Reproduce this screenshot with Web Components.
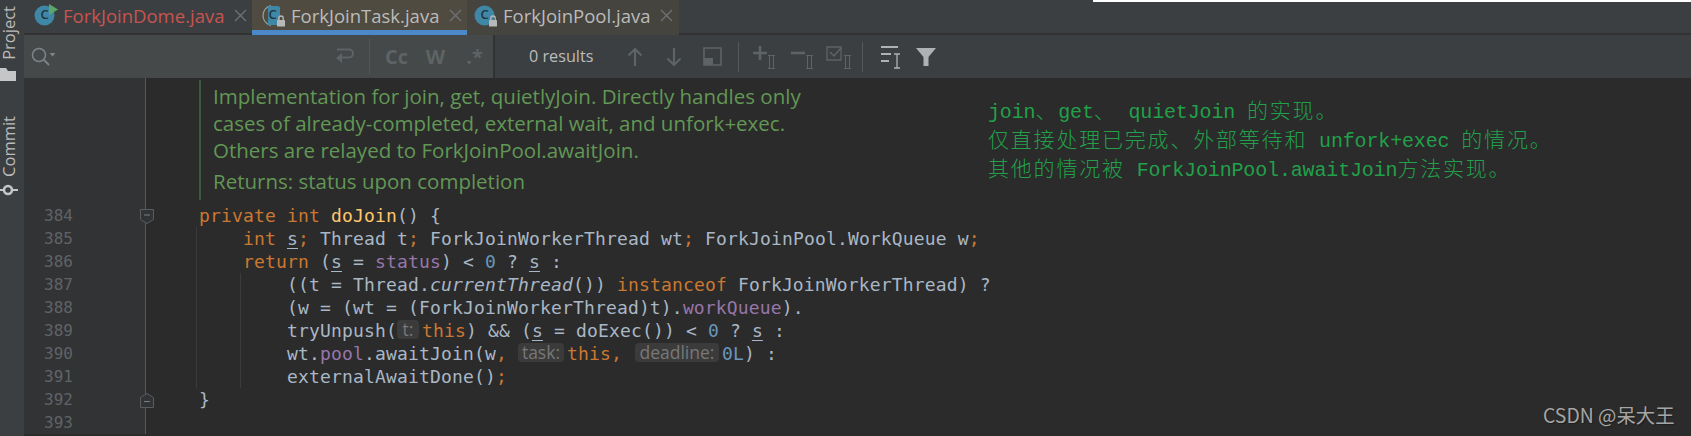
<!DOCTYPE html>
<html>
<head>
<meta charset="utf-8">
<title>ForkJoinTask.java</title>
<style>
  html, body { margin: 0; padding: 0; background: #2b2b2b; }
</style>
</head>
<body>
<ide-window>
  <tool-strip slot="strip"></tool-strip>
  <tab-strip slot="tabs">
    <editor-tab name="ForkJoinDome.java" kind="run" width="228" color="#c75450"></editor-tab>
    <editor-tab name="ForkJoinTask.java" kind="pinned" width="215" active></editor-tab>
    <editor-tab name="ForkJoinPool.java" kind="lock" width="212" pad="7" tint="#45443f"></editor-tab>
  </tab-strip>
  <find-bar slot="find"></find-bar>
  <code-pane slot="editor">
    <doc-block>
      <p>Implementation for join, get, quietlyJoin. Directly handles only</p>
      <p>cases of already-completed, external wait, and unfork+exec.</p>
      <p>Others are relayed to ForkJoinPool.awaitJoin.</p>
      <p class="ret">Returns: status upon completion</p>
    </doc-block>
    <code-line num="384" fold="open"><k>private int </k><m>doJoin</m>() {</code-line>
    <code-line num="385" guides="1">    <k>int </k><u>s</u><k>;</k> Thread t<k>;</k> ForkJoinWorkerThread wt<k>;</k> ForkJoinPool.WorkQueue w<k>;</k></code-line>
    <code-line num="386" guides="1">    <k>return</k> (<u>s</u> = <f>status</f>) &lt; <n>0</n> ? <u>s</u> :</code-line>
    <code-line num="387" guides="2">        ((t = Thread.<i>currentThread</i>()) <k>instanceof</k> ForkJoinWorkerThread) ?</code-line>
    <code-line num="388" guides="2">        (w = (wt = (ForkJoinWorkerThread)t).<f>workQueue</f>).</code-line>
    <code-line num="389" guides="2">        tryUnpush(<hint-pill w="22">t:</hint-pill><k>this</k>) &amp;&amp; (<u>s</u> = doExec()) &lt; <n>0</n> ? <u>s</u> :</code-line>
    <code-line num="390" guides="2">        wt.<f>pool</f>.awaitJoin(w<k>,</k> <hint-pill w="46">task:</hint-pill><k>this,</k> <hint-pill w="84" style="margin-left:2px">deadline:</hint-pill><n>0L</n>) :</code-line>
    <code-line num="391" guides="2">        externalAwaitDone()<k>;</k></code-line>
    <code-line num="392" fold="close">}</code-line>
    <code-line num="393"></code-line>
  </code-pane>
  <note-overlay slot="over"></note-overlay>
</ide-window>

<script>
// code tokens, no shadow needed for these, they are only styled by the line's ::slotted rules
class CodeLine extends HTMLElement {
  connectedCallback() {
    const num = this.getAttribute("num") || "";
    const fold = this.getAttribute("fold");
    const guides = Number(this.getAttribute("guides") || 0);
    const marker = fold === "open"
      ? `<svg class="fold" width="14" height="15" viewBox="0 0 14 15"><path d="M.5.5h13v10l-6.500 4-6.500-4z" fill="#313335" stroke="#5a5d5f"/><path d="M4 6h6" stroke="#7a7d7f"/></svg>`
      : fold === "close"
      ? `<svg class="fold" width="14" height="15" viewBox="0 0 14 15"><path d="M.5 14.500v-10l6.500-4 6.500 4v10z" fill="#313335" stroke="#5a5d5f"/><path d="M4 8.500h6" stroke="#7a7d7f"/></svg>`
      : "";
    let bg = "none";
    if (guides === 1) bg = "linear-gradient(#3b3b3b,#3b3b3b) 50px 0/1px 100% no-repeat";
    if (guides === 2) bg = "linear-gradient(#3b3b3b,#3b3b3b) 50px 0/1px 100% no-repeat, linear-gradient(#3b3b3b,#3b3b3b) 94px 0/1px 100% no-repeat";
    this.attachShadow({ mode: "open" }).innerHTML = `
      <style>
        :host { display: grid; grid-template-columns: 122px 1fr; height: 23px; }
        .gutter {
          position: relative;
          background: #313335;
          border-right: 1px solid #555759;
          color: #606366;
          font: 16px/23px "DejaVu Sans Mono", monospace;
          padding-left: 20px;
        }
        .fold { position: absolute; left: 116px; top: 5px; }
        pre {
          margin: 0;
          padding-left: 53px;
          height: 23px;
          background: ${bg};
          color: #a9b7c6;
          font: 18px/23px "DejaVu Sans Mono", monospace;
          letter-spacing: 0.16px;
          white-space: pre;
        }
        ::slotted(k) { color: #cc7832; }
        ::slotted(m) { color: #ffc66d; }
        ::slotted(f) { color: #9876aa; }
        ::slotted(n) { color: #6897bb; }
        ::slotted(u) { text-decoration: underline; text-underline-offset: 3px; }
        ::slotted(i) { font-style: italic; }
      </style>
      <div class="gutter">${num}${marker}</div>
      <pre><slot></slot></pre>`;
  }
}

class HintPill extends HTMLElement {
  connectedCallback() {
    this.attachShadow({ mode: "open" }).innerHTML = `<style>
        :host {
          display: inline-block;
          box-sizing: border-box;
          width: ${this.getAttribute("w")}px;
          height: 19px;
          margin: 0 3px 0 0;
          background: #3b3b3b;
          border-radius: 4px;
          color: #787878;
          font: 17.500px/18px "Open Sans", sans-serif;
          letter-spacing: 0;
          text-align: center;
          white-space: nowrap;
          vertical-align: 1px;
        }
      </style><slot></slot>`;
  }
}

class DocBlock extends HTMLElement {
  constructor() {
    super();
    this.attachShadow({ mode: "open" }).innerHTML = `
      <style>
        :host { display: grid; grid-template-columns: 122px 1fr; height: 126px; }
        .gutter { background: #313335; border-right: 1px solid #555759; }
        .body { padding: 2px 0 0 53px; }
        .inner {
          box-sizing: border-box;
          height: 120px;
          border-left: 2px solid #3d5a3b;
          padding: 3px 0 0 12px;
          color: #629755;
          font: 20.500px/27px "Open Sans", sans-serif;
        }
        ::slotted(p) { margin: 0; white-space: nowrap; }
        ::slotted(p.ret) { margin-top: 4px; }
      </style>
      <div class="gutter"></div>
      <div class="body"><div class="inner"><slot></slot></div></div>`;
  }
}

class CodePane extends HTMLElement {
  constructor() {
    super();
    this.attachShadow({ mode: "open" }).innerHTML = `
      <style>
        :host { display: block; height: 358px; overflow: hidden; background: #2b2b2b; }
      </style><slot></slot>`;
  }
}

class ToolStrip extends HTMLElement {
  constructor() {
    super();
    this.attachShadow({ mode: "open" }).innerHTML = `
      <style>
        :host { display: flex; flex-direction: column; width: 24px; height: 436px; background: #3c3f41; color: #bbbbbb;
          font: 16.500px "Open Sans", sans-serif; padding-top: 6px; box-sizing: border-box; }
        .v { writing-mode: vertical-rl; transform: rotate(180deg); width: 17px; line-height: 17px; white-space: nowrap; }
        svg { display: block; flex: none; }
      </style>
      <span class="v">Project</span>
      <svg style="margin-top:6px" width="17" height="15" viewBox="0 0 17 15"><path d="M0 2h6l2 3h8v10H0z" fill="#c4c6c8"/></svg>
      <span class="v" style="margin-top:35px">Commit</span>
      <svg style="margin-top:6px" width="18" height="14" viewBox="0 0 18 14"><circle cx="8" cy="7" r="4" fill="none" stroke="#c4c6c8" stroke-width="2.600"/><path d="M0 7h3M13 7h5" stroke="#c4c6c8" stroke-width="2"/></svg>`;
  }
}

class TabStrip extends HTMLElement {
  constructor() {
    super();
    this.attachShadow({ mode: "open" }).innerHTML = `
      <style>
        :host { display: flex; height: 35px; box-sizing: border-box; background: #3c3f41; border-bottom: 2px solid #323232; }
      </style><slot></slot>`;
  }
}

class EditorTab extends HTMLElement {
  connectedCallback() {
    const name = this.getAttribute("name");
    const kind = this.getAttribute("kind");
    const active = this.hasAttribute("active");
    const pad = this.getAttribute("pad") || 10;
    const tint = active ? "#4f4b41" : (this.getAttribute("tint") || "transparent");
    const lock = `<rect x="15" y="17" width="8" height="6.500" rx=".5" fill="#b6b8ba"/><path d="M16.800 17v-1.800a2.200 2.200 0 0 1 4.400 0V17" fill="none" stroke="#b6b8ba" stroke-width="1.300"/>`;
    const letter = `<text x="10.500" y="16" text-anchor="middle" font-family="Open Sans, sans-serif" font-size="13" font-weight="600" fill="#23343c">C</text>`;
    let icon;
    if (kind === "run") {
      icon = `<circle cx="10.500" cy="12.500" r="10" fill="#3f87a6"/>${letter}<path d="M15 1l9 5.500-9 5.500z" fill="#59a869"/>`;
    } else if (kind === "pinned") {
      icon = `<path d="M9 2.700a10 10 0 0 0 0 19.600" fill="none" stroke="#9a9a94" stroke-width="1.300"/><path d="M6 3h10a2 2 0 0 1 2 2v15a2 2 0 0 1-2 2H6z" fill="#3f87a6"/>${letter}${lock}`;
    } else {
      icon = `<circle cx="10.500" cy="12.500" r="10" fill="#3f87a6"/>${letter}${lock}`;
    }
    this.attachShadow({ mode: "open" }).innerHTML = `
      <style>
        :host {
          display: flex; align-items: center; box-sizing: border-box;
          width: ${this.getAttribute("width")}px; height: 35px; margin-bottom: -2px; padding: 0 0 5px ${pad}px;
          background: ${tint};
          ${active ? "box-shadow: inset 0 -5px 0 #4a88c7;" : ""}
          color: ${this.getAttribute("color") || "#bbbbbb"};
          font: 18.500px "Open Sans", sans-serif;
        }
        svg.i { flex: none; margin-right: 5px; }
        .n { white-space: nowrap; }
        svg.x { flex: none; margin-left: 10px; }
      </style>
      <svg class="i" width="24" height="25" viewBox="0 0 24 25">${icon}</svg>
      <span class="n">${name}</span>
      <svg class="x" width="13" height="13" viewBox="0 0 13 13"><path d="M1 1l11 11M12 1L1 12" stroke="#6e7173" stroke-width="1.400"/></svg>`;
  }
}

class FindBar extends HTMLElement {
  constructor() {
    super();
    const ii = `<path d="M0 .5h7M0 13.500h7M1.500 1v12M5.500 1v12" stroke="#5f6366" fill="none"/>`;
    this.attachShadow({ mode: "open" }).innerHTML = `
      <style>
        :host { display: flex; height: 43px; background: #3c3f41; color: #bbbbbb; font: 16.200px "Open Sans", sans-serif; }
        .field { display: flex; align-items: center; box-sizing: border-box; width: 471px; background: #45494a; border-right: 2px solid #323232; padding-left: 7px; }
        .grow { flex: 1; }
        .bar { width: 1px; height: 36px; background: #515658; flex: none; }
        .t { color: #5e6365; font-weight: 700; font-size: 20px; width: 39px; text-align: center; }
        .tools { flex: 1; display: flex; align-items: center; }
        .count { margin-left: 34px; width: 63px; white-space: nowrap; margin-top: -1px; }
        svg { display: block; flex: none; }
        .sep { width: 1px; height: 30px; background: #55585a; flex: none; }
      </style>
      <div class="field">
        <svg width="25" height="20" viewBox="0 0 25 20"><circle cx="8" cy="8" r="6.500" fill="none" stroke="#7f8487" stroke-width="1.500"/><path d="M13 13l5 5" stroke="#7f8487" stroke-width="1.800"/><path d="M18.500 6h6l-3 3.500z" fill="#7f8487"/></svg>
        <div class="grow"></div>
        <svg style="margin-right:15px" width="20" height="18" viewBox="0 0 20 18"><path d="M3 1.500h12a3.500 3.500 0 0 1 0 8H4" fill="none" stroke="#5e6365" stroke-width="2"/><path d="M8 5l-6 5 6 5z" fill="#5e6365"/></svg>
        <div class="bar"></div>
        <span class="t" style="margin-left:7px">Cc</span>
        <span class="t">W</span>
        <span class="t" style="margin-right:-1px">.*</span>
      </div>
      <div class="tools">
        <span class="count">0 results</span>
        <svg style="margin-left:35px" width="16" height="20" viewBox="0 0 16 20"><path d="M8 19V2M1.500 8.500L8 2l6.500 6.500" fill="none" stroke="#5e6365" stroke-width="2.200"/></svg>
        <svg style="margin-left:23px" width="16" height="20" viewBox="0 0 16 20"><path d="M8 1v17M1.500 11.500L8 18l6.500-6.500" fill="none" stroke="#5e6365" stroke-width="2.200"/></svg>
        <svg style="margin-left:21px" width="19" height="19" viewBox="0 0 19 19"><path d="M1 1h17v17H1z" fill="none" stroke="#5e6365" stroke-width="1.600"/><path d="M1 11h9v7H1z" fill="#5e6365"/></svg>
        <div class="sep" style="margin-left:16px"></div>
        <svg style="margin-left:13px" width="24" height="24" viewBox="0 0 24 24"><path d="M8 1v14M1 8h14" stroke="#5e6365" stroke-width="2.600"/><g transform="translate(16 10)">${ii}</g></svg>
        <svg style="margin-left:14px" width="24" height="24" viewBox="0 0 24 24"><path d="M1 8h14" stroke="#5e6365" stroke-width="2.600"/><g transform="translate(16 10)">${ii}</g></svg>
        <svg style="margin-left:12px" width="26" height="24" viewBox="0 0 26 24"><path d="M1 2h14v13H1z" fill="none" stroke="#5e6365" stroke-width="1.300"/><path d="M4 7l4 4 7-8" fill="none" stroke="#5e6365" stroke-width="1.500"/><g transform="translate(18 10)">${ii}</g></svg>
        <div class="sep" style="margin-left:10px"></div>
        <svg style="margin-left:18px" width="22" height="26" viewBox="0 0 22 26"><path d="M0 3h17M0 10h10M0 17h8" stroke="#afb1b3" stroke-width="2.200"/><path d="M13 10h6M13 24h6M16 10v14" stroke="#afb1b3" stroke-width="1.300" fill="none"/></svg>
        <svg style="margin-left:13px" width="20" height="20" viewBox="0 0 20 20"><path d="M0 1h20l-7.500 9v9h-5v-9z" fill="#afb1b3"/></svg>
      </div>`;
  }
}

// the pasted translation, the watermark and the white sliver all sit on top of the screenshot
class NoteOverlay extends HTMLElement {
  constructor() {
    super();
    this.attachShadow({ mode: "open" }).innerHTML = `
      <style>
        :host { position: absolute; inset: 0; pointer-events: none; }
        .sliver { position: absolute; left: 1093px; right: 0; top: 0; height: 2px; background: #fff; }
        .note {
          position: absolute; left: 988px; top: 95px;
          color: #22a04a;
          font: 300 21px "Noto Sans CJK SC", sans-serif;
          letter-spacing: 1.800px;
        }
        .note div { height: 29px; line-height: 29px; white-space: pre; overflow: visible; }
        .note b { font: 20px "Liberation Mono", monospace; letter-spacing: -.15px; }
        .mark {
          position: absolute; left: 1543px; top: 403px;
          color: #a5a5a5;
          font: 19.400px/24px "Noto Sans CJK SC", sans-serif;
          text-shadow: 1px 1px 1px #1e1e1e;
          white-space: nowrap;
        }
      </style>
      <div class="sliver"></div>
      <div class="note">
        <div><b>join</b>、<b>get</b>、<b> quietJoin </b>的实现。</div>
        <div>仅直接处理已完成、外部等待和<b> unfork+exec </b>的情况。</div>
        <div>其他的情况被<b> ForkJoinPool.awaitJoin</b>方法实现。</div>
      </div>
      <div class="mark">CSDN @呆大王</div>`;
  }
}

class IdeWindow extends HTMLElement {
  constructor() {
    super();
    this.attachShadow({ mode: "open" }).innerHTML = `
      <style>
        :host { display: flex; position: relative; width: 1691px; height: 436px; overflow: hidden; }
        .main { flex: 1; display: flex; flex-direction: column; min-width: 0; }
      </style>
      <slot name="strip"></slot>
      <div class="main">
        <slot name="tabs"></slot>
        <slot name="find"></slot>
        <slot name="editor"></slot>
      </div>
      <slot name="over"></slot>`;
  }
}

customElements.define("code-line", CodeLine);
customElements.define("hint-pill", HintPill);
customElements.define("doc-block", DocBlock);
customElements.define("code-pane", CodePane);
customElements.define("tool-strip", ToolStrip);
customElements.define("tab-strip", TabStrip);
customElements.define("editor-tab", EditorTab);
customElements.define("find-bar", FindBar);
customElements.define("note-overlay", NoteOverlay);
customElements.define("ide-window", IdeWindow);
</script>
</body>
</html>
